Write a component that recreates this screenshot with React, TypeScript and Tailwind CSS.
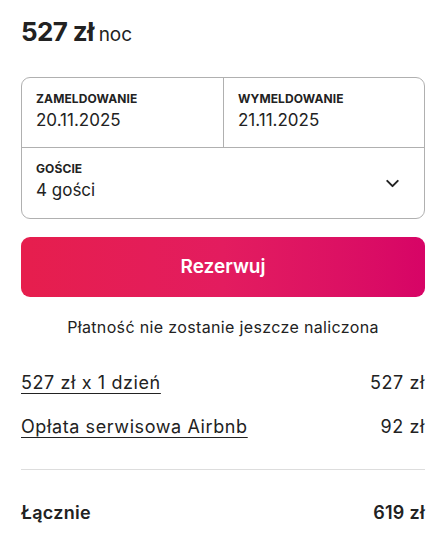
import { ChevronDown } from "lucide-react"

export default function App() {
  return (
    <main
      className="w-[446px] h-[548px] bg-white px-[21px] pt-[15px] text-[#222222] overflow-hidden"
      style={{ fontFamily: "Inter, 'Noto Sans', sans-serif" }}
    >
      <div className="flex items-baseline gap-[5px] h-[34px]">
        <span className="text-[26px] font-bold tracking-[-0.6px] leading-[34px]">527 zł</span>
        <span className="text-[19px] leading-[34px]">noc</span>
      </div>

      <div className="mt-[28px] border border-[#b0b0b0] rounded-[9px] overflow-hidden">
        <div className="grid grid-cols-2 h-[70px] border-b border-[#b0b0b0]">
          <Field label="ZAMELDOWANIE" value="20.11.2025" />
          <div className="border-l border-[#b0b0b0]">
            <Field label="WYMELDOWANIE" value="21.11.2025" />
          </div>
        </div>
        <div className="flex items-center justify-between h-[70px] pr-[21px]">
          <Field label="GOŚCIE" value="4 gości" />
          <ChevronDown size={21} strokeWidth={2.25} className="mt-[1px]" />
        </div>
      </div>

      <button className="mt-[18px] w-full h-[60px] rounded-[9px] bg-gradient-to-r from-[#e61e4d] via-[#e31c5f] to-[#d70466] text-white text-[19px] font-semibold">
        Rezerwuj
      </button>

      <p className="mt-[19px] text-center text-[16px] tracking-[0.35px] leading-[22px]">
        Płatność nie zostanie jeszcze naliczona
      </p>

      <div className="mt-[33px] flex flex-col gap-[20px] text-[18px]">
        <Row label="527 zł x 1 dzień" value="527 zł" />
        <Row label="Opłata serwisowa Airbnb" value="92 zł" />
      </div>

      <div className="mt-[30px] border-t border-[#dddddd]" />

      <div className="mt-[31px] flex justify-between text-[18px] font-semibold tracking-[0.3px] leading-[24px]">
        <span>Łącznie</span>
        <span>619 zł</span>
      </div>
    </main>
  )
}

function Field({ label, value }: { label: string; value: string }) {
  return (
    <div className="flex flex-col h-full px-[14px] pt-[13px]">
      <span className="text-[12px] font-bold leading-[16px] tracking-[0.1px]">{label}</span>
      <span className="text-[17px] leading-[24px] mt-[1px]">{value}</span>
    </div>
  )
}

function Row({ label, value }: { label: string; value: string }) {
  return (
    <div className="flex justify-between leading-[24px] tracking-[0.6px]">
      <span className="underline underline-offset-[4px] decoration-1">{label}</span>
      <span>{value}</span>
    </div>
  )
}
